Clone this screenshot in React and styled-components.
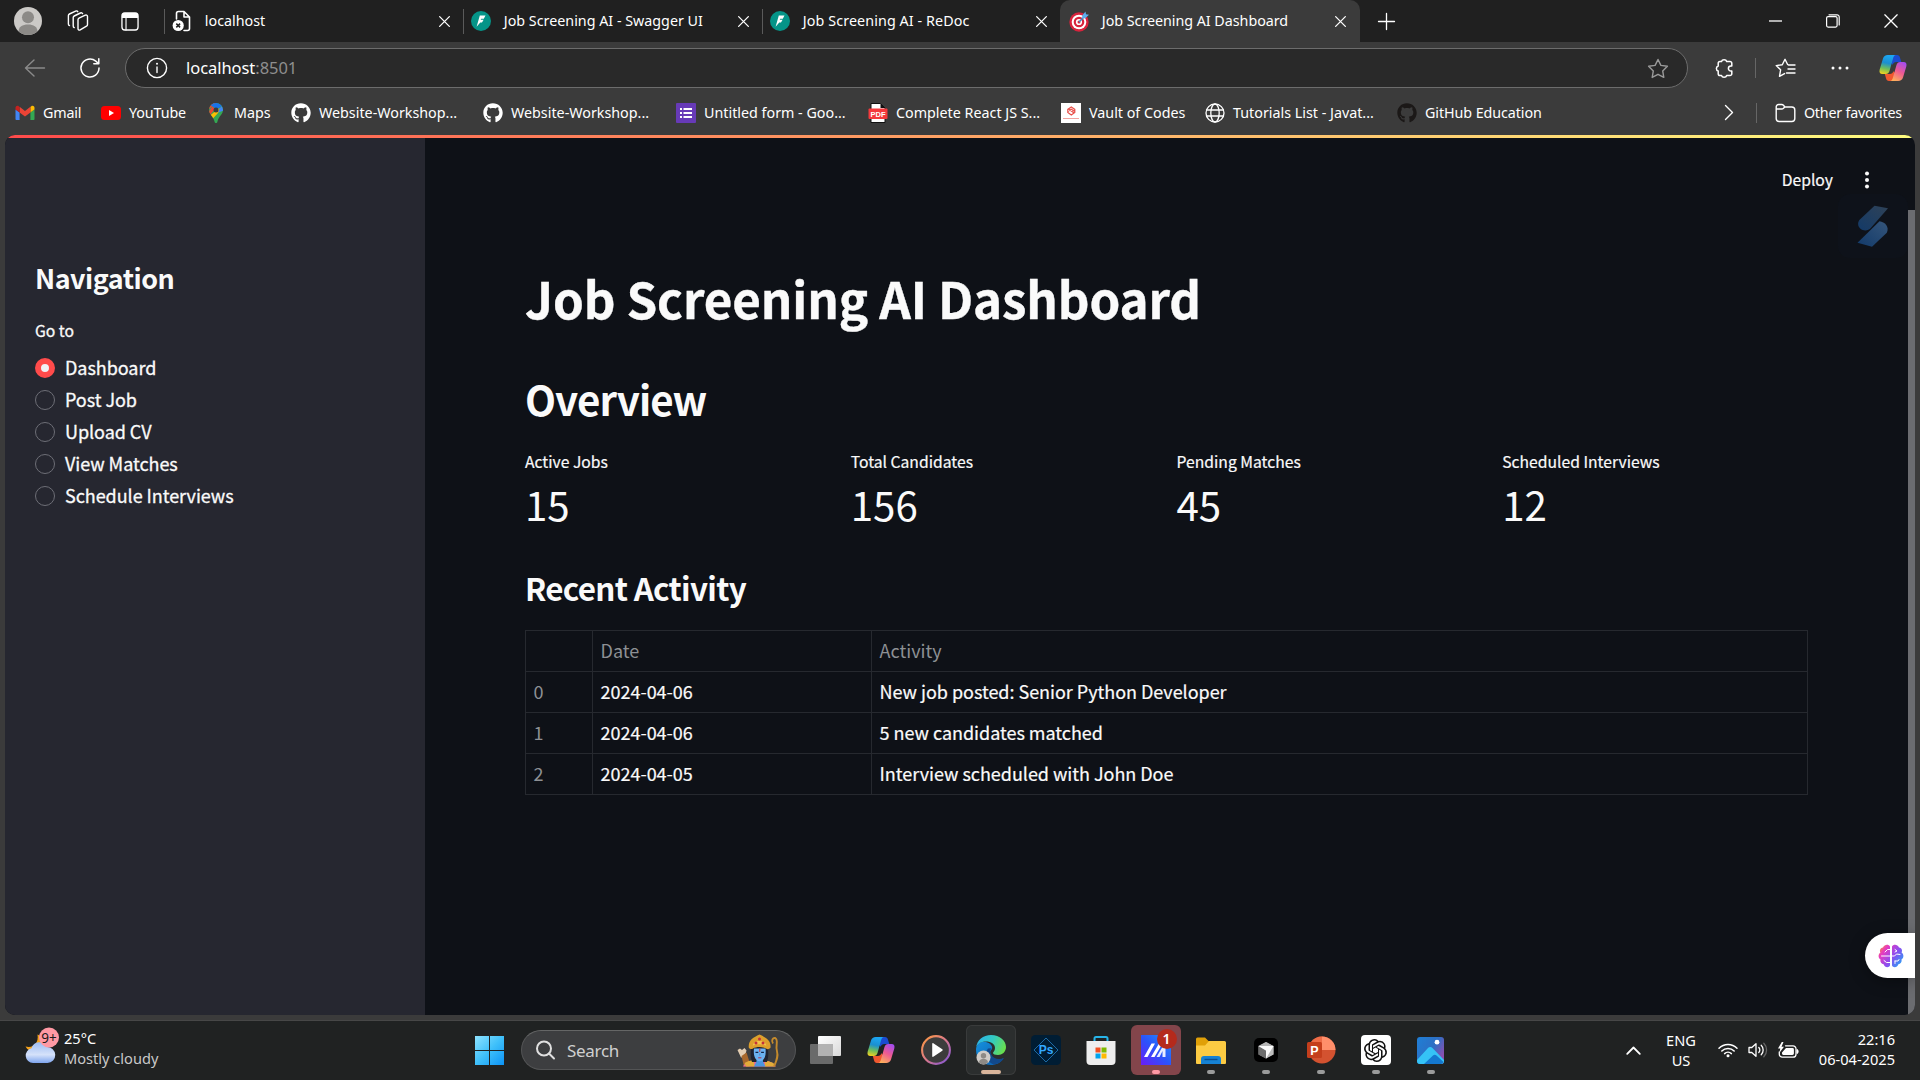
import React from "react";
import styled, { createGlobalStyle, css } from "styled-components";
import { FaGithub } from "react-icons/fa";
import { SiOpenai } from "react-icons/si";

const SEGOE = `"Noto Sans", "Open Sans", sans-serif`;
const SOURCE = `"Noto Sans CJK SC", "Noto Sans CJK JP", "Noto Sans", sans-serif`;

const Global = createGlobalStyle`
  * { box-sizing: border-box; }
  html, body { margin: 0; padding: 0; background: #3b3b3b; overflow: hidden; }
  body { font-family: ${SEGOE}; color: #fff; }
  svg { display: block; flex: none; overflow: visible; }
`;

const Screen = styled.div`
  width: 1920px;
  height: 1080px;
  display: flex;
  flex-direction: column;
  background: #3b3b3b;
  overflow: hidden;
`;

/* ---------- browser chrome ---------- */
const TabStrip = styled.header`
  height: 42px;
  flex: none;
  display: flex;
  align-items: stretch;
  background: #202020;
`;
const StripTools = styled.div`
  width: 164px;
  flex: none;
  display: flex;
  align-items: center;
  padding-left: 14px;
`;
const StripTool = styled.span`
  width: ${(p) => p.$w}px;
  display: flex;
  flex: none;
`;
const TabItem = styled.div`
  width: ${(p) => p.$w || 299}px;
  flex: none;
  display: flex;
  align-items: center;
  padding: 0 13px 0 8px;
  ${(p) =>
    p.$active
      ? css`
          background: #3b3b3b;
          border-radius: 10px 10px 0 0;
          padding: 0 14px 0 9px;
        `
      : css`
          background: linear-gradient(#5a5a5a, #5a5a5a) 0 9px / 1px 25px no-repeat;
        `}
`;
const TabTitle = styled.span`
  flex: 1;
  margin-left: 12.8px;
  font-size: 14.3px;
  line-height: 20px;
  letter-spacing: ${(p) => p.$ls || 0}px;
  white-space: nowrap;
`;
const NewTab = styled.div`
  width: 53px;
  display: flex;
  align-items: center;
  justify-content: center;
`;
const WindowButtons = styled.div`
  margin-left: auto;
  display: flex;
`;
const WindowButton = styled.div`
  width: 58px;
  display: flex;
  align-items: center;
  justify-content: center;
`;
const AddressRow = styled.div`
  height: 52px;
  flex: none;
  display: flex;
  align-items: center;
  padding-left: 24px;
`;
const NavButton = styled.span`
  width: ${(p) => p.$w}px;
  display: flex;
  flex: none;
`;
const AddressBar = styled.div`
  width: 1563px;
  height: 40px;
  flex: none;
  display: flex;
  align-items: center;
  padding: 0 18px 0 20px;
  border: 1px solid #6c6c6c;
  border-radius: 20px;
  background: #292929;
`;
const Url = styled.span`
  flex: 1;
  margin-left: 18px;
  padding-bottom: 1px;
  font-size: 16.5px;
  line-height: 24px;
  letter-spacing: -0.05px;
  color: #fff;
`;
const UrlPort = styled.span`
  color: #8e8e8e;
`;
const ToolCell = styled.span`
  width: ${(p) => p.$w}px;
  padding-left: ${(p) => p.$pl || 0}px;
  display: flex;
  justify-content: center;
  flex: none;
`;
const Rule = styled.i`
  width: 1px;
  height: 20px;
  flex: none;
  background: #666;
`;
const FavoritesBar = styled.nav`
  height: 41px;
  flex: none;
  display: flex;
  align-items: center;
  padding: 0 18px 4px 15px;
`;
const Favorite = styled.div`
  width: ${(p) => (p.$w ? `${p.$w}px` : "auto")};
  flex: none;
  display: flex;
  align-items: center;
  gap: 8px;
  font-size: 14.3px;
  line-height: 20px;
  letter-spacing: ${(p) => p.$ls || 0}px;
  white-space: nowrap;
`;
const FavoriteName = styled.span`
  padding-top: 1px;
`;
const FavoritesEnd = styled.div`
  margin-left: auto;
  display: flex;
  align-items: center;
`;

/* ---------- dashboard page ---------- */
const Page = styled.div`
  position: relative;
  height: 880px;
  margin: 0 5px 5px;
  flex: none;
  display: flex;
  background: #0e1117;
  border-radius: 10px;
  overflow: hidden;
`;
const Decoration = styled.div`
  position: absolute;
  left: 0;
  right: 0;
  top: 0;
  height: 3px;
  background: linear-gradient(90deg, #ff4b4b, #fffd80);
`;
const Sidebar = styled.aside`
  width: 420px;
  flex: none;
  padding: 125px 30px 0;
  background: #262730;
  font-family: ${SOURCE};
`;
const NavHeading = styled.h2`
  margin: 0;
  font-size: 26.9px;
  line-height: 36px;
  font-weight: 700;
  letter-spacing: -0.48px;
  color: #fafafa;
`;
const RadioLabel = styled.p`
  margin: 21px 0 7px;
  font-size: 15.7px;
  line-height: 28px;
  -webkit-text-stroke: 0.3px #fafafa;
  color: #fafafa;
`;
const RadioRow = styled.label`
  height: 32px;
  display: flex;
  align-items: center;
  gap: 10px;
  font-size: 18px;
  line-height: 30px;
  letter-spacing: -0.05px;
  -webkit-text-stroke: 0.3px #fafafa;
  color: #fafafa;
`;
const RadioText = styled.span`
  padding-bottom: 2px;
`;
const Dot = styled.span`
  width: 20px;
  height: 20px;
  flex: none;
  border-radius: 50%;
  ${(p) =>
    p.$on
      ? css`
          border: 6px solid #ff4b4b;
          background: #f0f2f6;
        `
      : css`
          border: 1px solid #6d6e76;
        `}
`;
const Main = styled.main`
  flex: 1;
  padding: 0 100px;
  font-family: ${SOURCE};
  color: #fafafa;
`;
const Toolbar = styled.div`
  height: 75px;
  margin-right: -100px;
  padding: 15px 58px 0 0;
  display: flex;
  align-items: center;
  justify-content: flex-end;
  gap: 31px;
  font-size: 15.7px;
  line-height: 24px;
`;
const DeployLabel = styled.span`
  padding-bottom: 1px;
  -webkit-text-stroke: 0.2px #fafafa;
`;
const Title = styled.h1`
  margin: 55px 0 0;
  font-size: 49.3px;
  line-height: 66px;
  font-weight: 700;
  letter-spacing: -0.1px;
  -webkit-text-stroke: 0.4px #fafafa;
  white-space: nowrap;
`;
const SectionTitle = styled.h2`
  margin: ${(p) => p.$mt}px 0 0;
  font-size: ${(p) => p.$size}px;
  line-height: 54px;
  font-weight: 700;
  letter-spacing: ${(p) => p.$ls}px;
  white-space: nowrap;
`;
const Metrics = styled.div`
  display: grid;
  grid-template-columns: repeat(4, 1fr);
  width: 1303px;
  margin-top: 23px;
`;
const MetricLabel = styled.div`
  font-size: 15.7px;
  line-height: 26px;
  -webkit-text-stroke: 0.2px #fafafa;
`;
const MetricValue = styled.div`
  font-size: 40.3px;
  line-height: 56px;
  padding: 1px 0 2px;
`;
const Table = styled.table`
  width: 1283px;
  margin-top: 15px;
  table-layout: fixed;
  border-collapse: collapse;
  font-size: 18px;
  line-height: 24px;
`;
const Cell = styled.td`
  width: ${(p) => p.$w || "auto"};
  height: 41px;
  padding: 0 7px 2px 7.6px;
  border: 1px solid #26292f;
  text-align: left;
  font-weight: 400;
  letter-spacing: -0.03px;
  white-space: nowrap;
  color: ${(p) => (p.$muted ? "#8d9094" : "#fafafa")};
  ${(p) => !p.$muted && "-webkit-text-stroke: 0.2px #fafafa;"}
`;
const ScrollThumb = styled.div`
  position: absolute;
  right: 0;
  top: 75px;
  width: 7px;
  bottom: 0;
  background: #6b6c70;
`;
const SideLogo = styled.div`
  position: absolute;
  right: 7px;
  top: 59px;
  width: 70px;
  height: 64px;
  display: flex;
  align-items: center;
  justify-content: center;
  border-radius: 12px;
  background: rgba(16, 24, 40, 0.2);
`;
const BrainButton = styled.div`
  position: absolute;
  right: 0;
  top: 798px;
  width: 50px;
  height: 45px;
  padding-left: 13px;
  display: flex;
  align-items: center;
  border-radius: 23px 0 0 23px;
  background: #fff;
  box-shadow: 0 3px 16px rgba(0, 0, 0, 0.35);
`;

/* ---------- taskbar ---------- */
const TaskBar = styled.footer`
  height: 60px;
  flex: none;
  display: flex;
  align-items: center;
  padding: 0 25px 1px;
  border-top: 1px solid #474747;
  background: #202222;
`;
const Weather = styled.div`
  width: 450px;
  flex: none;
  display: flex;
  align-items: center;
  gap: 4px;
  padding-bottom: 4px;
`;
const Lines = styled.div`
  font-size: 14.6px;
  line-height: 20px;
  padding-bottom: ${(p) => p.$pb || 0}px;
  text-align: ${(p) => p.$align || "left"};
  white-space: nowrap;
`;
const Dim = styled.div`
  color: #c9c9c9;
`;
const SearchBox = styled.div`
  width: 275px;
  height: 40px;
  margin: 0 2px 0 17px;
  flex: none;
  display: flex;
  align-items: center;
  padding: 0 15px 0 13px;
  border: 1px solid #535455;
  border-top-color: #656666;
  border-radius: 20px;
  background: #3d3e40;
`;
const SearchText = styled.span`
  flex: 1;
  margin-left: 11px;
  font-size: 17px;
  letter-spacing: -0.3px;
  color: #d0d0d0;
`;
const AppSlot = styled.div`
  position: relative;
  width: 50px;
  height: 50px;
  margin: 0 2.5px;
  flex: none;
  display: flex;
  align-items: center;
  justify-content: center;
  border-radius: 6px;
  background: ${(p) => p.$bg || "transparent"};
  ${(p) => p.$outline && "box-shadow: inset 0 0 0 1px #393b3b;"}
`;
const Indicator = styled.i`
  position: absolute;
  bottom: 1px;
  left: ${(p) => 25 - p.$w / 2}px;
  width: ${(p) => p.$w}px;
  height: 4px;
  border-radius: 2px;
  background: ${(p) => p.$c || "#9a9b9b"};
`;
const Count = styled.span`
  position: absolute;
  left: 26px;
  top: 4px;
  width: 20px;
  height: 20px;
  border-radius: 50%;
  background: #b52a1c;
  font-size: 14px;
  line-height: 20px;
  font-weight: 600;
  text-align: center;
`;
const Tray = styled.div`
  margin-left: auto;
  display: flex;
  align-items: center;
`;
const TrayCell = styled.div`
  width: ${(p) => p.$w}px;
  flex: none;
  display: flex;
  justify-content: ${(p) => p.$j || "center"};
`;

/* ---------- icons ---------- */
const line = { fill: "none", stroke: "#fff", strokeWidth: 1.4, strokeLinecap: "round", strokeLinejoin: "round" };

const Avatar = ({ size = 28 }) => (
  <svg width={size} height={size} viewBox="0 0 28 28">
    <clipPath id={`av${size}`}><circle cx="14" cy="14" r="14" /></clipPath>
    <g clipPath={`url(#av${size})`}>
      <rect width="28" height="28" fill="#cbc9c6" />
      <circle cx="14" cy="10.3" r="6" fill="#8c8a87" />
      <path d="M4.500 28v-3.500c0-4.500 4-7 9.500-7s9.500 2.500 9.500 7V28z" fill="#8c8a87" />
    </g>
  </svg>
);
const Workspaces = () => (
  <svg width="22" height="22" viewBox="0 0 22 22" {...line}>
    <path d="M11 9.800c0-.7.400-1.300 1-1.600l6.300-3c1.200-.5 2.200.2 2.200 1.300v7.900c0 .7-.4 1.400-1 1.700l-6.300 3.800c-1.200.6-2.200 0-2.200-1.300z" />
    <path d="M7.200 17.600C6.500 17.300 6.200 16.800 6.200 16V7.600c0-.7.400-1.300 1-1.600l6.200-3c.9-.4 1.900-.1 2.200.6" />
    <path d="M2.500 15.600c-.8-.300-1.100-.8-1.100-1.600V5.600c0-.7.400-1.300 1-1.600l6.200-2.900c.9-.4 1.900-.1 2.200.6" />
  </svg>
);
const TabActions = () => (
  <svg width="18" height="19" viewBox="0 0 19 19" preserveAspectRatio="none">
    <rect x="1" y="1" width="17" height="17" rx="3" {...line} />
    <path d="M1 4a3 3 0 0 1 3-3h11a3 3 0 0 1 3 3v2H1z" fill="#fff" />
    <path d="M5.300 6v12" {...line} strokeWidth="1.200" />
  </svg>
);
const BrokenPage = () => (
  <svg width="20" height="22" viewBox="0 0 20 22">
    <path d="M4.500 9V3.500A2 2 0 0 1 6.500 1.500H12l5.500 5.500v11.500a2 2 0 0 1-2 2H12M12 1.800V7h5.200" {...line} strokeWidth="1.600" />
    <circle cx="6.200" cy="15.500" r="5.600" fill="#fff" />
    <path d="m4.300 13.600 3.800 3.800m0-3.800-3.800 3.800" stroke="#202020" strokeWidth="1.500" />
  </svg>
);
const FastApi = () => (
  <svg width="20" height="20" viewBox="0 0 20 20">
    <circle cx="10" cy="10" r="10" fill="#059488" />
    <path d="M8.800 4.500h5.700l-1.700 3.200h-2.600l-.500 1.100h2.900l-1.600 2.800H9.300L5.600 15.800z" fill="#fff" />
  </svg>
);
const Target = () => (
  <svg width="20" height="21" viewBox="0 0 20 21">
    <circle cx="10" cy="11" r="9.700" fill="#d8233c" />
    <circle cx="10" cy="11" r="7.300" fill="#fff" />
    <circle cx="10" cy="11" r="5.300" fill="#d8233c" />
    <circle cx="10" cy="11" r="3.100" fill="#fff" />
    <circle cx="10" cy="11" r="1.500" fill="#d8233c" />
    <path d="m10 11 6-6" stroke="#3b88c3" strokeWidth="1.400" />
    <path d="m13.200 4.500 3.300-4L17 3.300l3 .4-3.700 3.600-3 .2z" fill="#5dadec" />
  </svg>
);
const Close = ({ s = 11, w = 1.4 }) => (
  <svg width={s} height={s} viewBox="0 0 12 12"><path d="m.7.7 10.600 10.600m0-10.600L.7 11.300" {...line} strokeWidth={w} /></svg>
);
const Plus = () => (
  <svg width="17" height="17" viewBox="0 0 17 17"><path d="M8.500.5v16M.5 8.500h16" {...line} strokeWidth="1.300" /></svg>
);
const Restore = () => (
  <svg width="14" height="14" viewBox="0 0 14 14" {...line} strokeWidth="1.200">
    <rect x=".6" y="2.600" width="10.500" height="10.500" rx="1.500" />
    <path d="M3 .8h8a2.200 2.200 0 0 1 2.200 2.200v8" />
  </svg>
);
const Back = () => (
  <svg width="22" height="20" viewBox="0 0 22 20"><path d="M10 2 1.500 10 10 18M1.500 10h19" {...line} stroke="#8a8a8a" /></svg>
);
const Reload = () => (
  <svg width="22" height="22" viewBox="0 0 22 22"><path d="M20 11a9 9 0 1 1-3.200-6.900L19.500 6.500M19.800 1.800v5h-5" {...line} strokeWidth="1.500" /></svg>
);
const Info = () => (
  <svg width="22" height="22" viewBox="0 0 22 22">
    <circle cx="11" cy="11" r="9.600" {...line} />
    <path d="M11 10v5.500" {...line} />
    <circle cx="11" cy="6.800" r="1" fill="#fff" />
  </svg>
);
const Star = () => (
  <svg width="22" height="21" viewBox="0 0 22 21">
    <path d="m11 1.500 2.900 5.900 6.500.9-4.700 4.600 1.100 6.500L11 16.300l-5.800 3.100 1.100-6.500L1.600 8.300l6.500-.9z" {...line} stroke="#9a9a9a" />
  </svg>
);
const Puzzle = () => (
  <svg width="20" height="21" viewBox="0 0 20 21">
    <path d="M6 3.500h1.500a2.700 2.500 0 0 1 5.200 0H16A1.800 1.800 0 0 1 17.800 5.300V8h-.900a2.500 2.500 0 0 0 0 5h.9v2.700A1.800 1.800 0 0 1 16 17.500h-3.300a2.700 2.500 0 0 1-5.200 0H6a1.800 1.800 0 0 1-1.800-1.800V13a2.500 2.600 0 0 1 0-5V5.300A1.800 1.800 0 0 1 6 3.500z" {...line} strokeWidth="1.500" />
  </svg>
);
const FavList = () => (
  <svg width="21" height="20" viewBox="0 0 21 20" {...line}>
    <path d="M13 6.600 12.600 6.500 10 1.300 7.300 6.700 1.200 7.600l4.400 4.200-1.100 6.500 5-2.700M13.500 7h6.500M13 11h7M11.500 15h8.500" />
  </svg>
);
const Dots = () => (
  <svg width="18" height="4" viewBox="0 0 18 4" fill="#fff"><circle cx="2" cy="2" r="1.500" /><circle cx="9" cy="2" r="1.500" /><circle cx="16" cy="2" r="1.500" /></svg>
);
const Copilot = ({ s = 28, id }) => (
  <svg width={s} height={s} viewBox="0 0 28 28">
    <defs>
      <linearGradient id={`${id}a`} x1=".4" y1="0" x2=".2" y2="1">
        <stop offset="0" stopColor="#1ca6f2" /><stop offset=".4" stopColor="#1b8fd0" /><stop offset=".7" stopColor="#6fbf5a" /><stop offset="1" stopColor="#f4d21f" />
      </linearGradient>
      <linearGradient id={`${id}b`} x1=".8" y1="0" x2=".3" y2="1">
        <stop offset="0" stopColor="#a34cf0" /><stop offset=".5" stopColor="#ee5a92" /><stop offset="1" stopColor="#fdaf5c" />
      </linearGradient>
    </defs>
    <path d="M11 1h7c1.700 0 2.500 1 3 2.700L22.300 8h-5c-2 0-3 1-3.500 2.800L12 9z" fill="#1b4bd0" />
    <path d="M17 27h-7c-1.700 0-2.500-1-3-2.700L5.800 20h5c2 0 3-1 3.500-2.800L16 19z" fill="#f0582f" />
    <path d="M8.800 1H17c-1.700 0-2.400 1.500-2.900 3.200L10.500 17c-.6 2-1.800 3-3.700 3H3.500C.8 20 0 18 .7 15.500L4 4.500C4.700 2.200 6.300 1 8.800 1z" fill={`url(#${id}a)`} />
    <path d="M19.200 27H11c1.700 0 2.400-1.500 2.900-3.200L17.500 11c.6-2 1.800-3 3.700-3h3.300c2.700 0 3.500 2 2.800 4.500l-3.300 11c-.7 2.300-2.300 3.500-4.800 3.500z" fill={`url(#${id}b)`} />
  </svg>
);
const Gmail = () => (
  <svg width="20" height="16" viewBox="0 0 20 16">
    <path d="M1.600 15h3V7.500L.5 4.500v9.400c0 .6.500 1.100 1.100 1.100z" fill="#4285f4" />
    <path d="M15.400 15h3c.6 0 1.100-.5 1.100-1.100V4.500l-4.100 3z" fill="#34a853" />
    <path d="M15.400 2v5.500l4.100-3V2.800c0-1.700-1.900-2.600-3.200-1.600z" fill="#fbbc04" />
    <path d="M4.600 7.500V1.800L10 6l5.400-4.200v5.700L10 11.600z" fill="#ea4335" />
    <path d="M.5 2.800v1.700l4.100 3V1.900l-.9-.7C2.400.200.5 1.100.5 2.800z" fill="#c5221f" />
  </svg>
);
const YouTube = () => (
  <svg width="20" height="20" viewBox="0 0 20 20"><rect x="0" y="3" width="20" height="14" rx="3.500" fill="#f00" /><path d="M8 7v6l5-3z" fill="#fff" /></svg>
);
const Maps = () => (
  <svg width="18" height="20" viewBox="0 0 18 20">
    <clipPath id="pin"><path d="M8 0a7 7 0 0 1 7 7c0 4.500-4.500 6.500-5.500 11.500-.3 1.500-.8 1.500-1.500 1.500s-1.200 0-1.500-1.500C5.500 13.500 1 11.500 1 7a7 7 0 0 1 7-7z" /></clipPath>
    <g clipPath="url(#pin)">
      <rect width="18" height="20" fill="#34a853" />
      <path d="M-1 8 8 0H-1z" fill="#ea4335" />
      <path d="m3 2.500 6 4L15 2V0H3z" fill="#1a73e8" />
      <path d="m10 7 5-5 2 5-8 3z" fill="#4285f4" />
      <path d="M2 12.500 11.500 5 10 10l-5.500 6z" fill="#fbbc04" />
      <path d="M0 9.500 4.500 3.500 7 6l-5 6z" fill="#ea4335" />
    </g>
    <circle cx="8" cy="7" r="2.500" fill="#3b3b3b" />
  </svg>
);
const FormsIcon = () => (
  <svg width="20" height="20" viewBox="0 0 20 20">
    <rect width="20" height="20" rx="1" fill="#673ab7" />
    <path d="M4 5h2v2H4zm3.500 0H16v2H7.500zM4 9h2v2H4zm3.500 0H16v2H7.500zM4 13h2v2H4zm3.500 0H16v2H7.500z" fill="#fff" />
  </svg>
);
const PdfIcon = () => (
  <svg width="20" height="20" viewBox="0 0 20 20">
    <path d="M3 .5h9.500L17 5v14.500H3z" fill="#fff" stroke="#111" />
    <path d="M12.500.5V5H17z" fill="#111" />
    <rect x=".5" y="5.500" width="19" height="10.500" rx="1" fill="#f4393c" />
    <text x="10" y="13.600" textAnchor="middle" fontFamily="Liberation Sans, sans-serif" fontSize="7.500" fontWeight="700" fill="#fff">PDF</text>
  </svg>
);
const Vault = () => (
  <svg width="20" height="20" viewBox="0 0 20 20">
    <rect width="20" height="20" fill="#fff" />
    <g fill="none" stroke="#e8504a" strokeWidth="1.200"><path d="m10.300 4 3.500 2.400v3L10.300 12l-3.500-2.600v-3zM6.800 8.400l3.500-2.100 3.500 2.100M7.500 6l5.600 4" /></g>
    <path d="M2 15.500h16" stroke="#f2a39f" />
  </svg>
);
const Globe = () => (
  <svg width="20" height="20" viewBox="0 0 20 20" {...line} strokeWidth="1.300">
    <circle cx="10" cy="10" r="9" /><ellipse cx="10" cy="10" rx="4.200" ry="9" /><path d="M1.500 7h17M1.500 13h17" />
  </svg>
);
const ChevronR = () => (
  <svg width="10" height="17" viewBox="0 0 10 17"><path d="m1.500 1.500 7 7-7 7" {...line} /></svg>
);
const Folder = () => (
  <svg width="21" height="20" viewBox="0 0 21 20" {...line}>
    <path d="M1.200 5v10.500a3 3 0 0 0 3 3h12.600a3 3 0 0 0 3-3V7a3 3 0 0 0-3-3h-7L8.500 2.300A3 3 0 0 0 6.700 1.500H3.500A2.300 2.300 0 0 0 1.200 3.800zM1.200 6h5.500a2.500 2.500 0 0 0 1.800-.7L9.800 4" />
  </svg>
);
const Kebab = () => (
  <svg width="6" height="18" viewBox="0 0 6 18" fill="#fafafa"><circle cx="3" cy="2.400" r="2" /><circle cx="3" cy="9" r="2" /><circle cx="3" cy="15.600" r="2" /></svg>
);
const SMark = () => (
  <svg width="32" height="42" viewBox="0 0 32 42">
    <defs>
      <linearGradient id="sa" x1="1" y1="0" x2="0" y2="1"><stop offset="0" stopColor="#2f4257" /><stop offset="1" stopColor="#133a68" /></linearGradient>
      <linearGradient id="sb" x1="1" y1="0" x2="0" y2="1"><stop offset="0" stopColor="#35557a" /><stop offset="1" stopColor="#123a6a" /></linearGradient>
    </defs>
    <path d="M17.500.8 31 3.200 14 22.800c-2.200 2.300-5 3.400-8.300 2.300C.7 23 .1 18 2.400 15z" fill="url(#sa)" />
    <path d="M22.500 16.300c5.200.5 10.200 5.700 7.300 11.400L15 41.700.5 37.800z" fill="url(#sb)" />
  </svg>
);
const BrainIcon = () => (
  <svg width="26" height="24" viewBox="0 0 26 24">
    <defs>
      <linearGradient id="br" x1="0" y1=".1" x2="1" y2=".8"><stop offset="0" stopColor="#f79a2d" /><stop offset=".22" stopColor="#e93bbd" /><stop offset=".6" stopColor="#8b4df0" /><stop offset="1" stopColor="#27a4f5" /></linearGradient>
    </defs>
    <path d="M12 2.500C11 .3 6.500-.2 5 3.600 2 4 1.400 7 2.400 8.500 0 10 0 14 2.400 15.300c-.5 3 1.200 4.700 3.200 4.900C6.700 24 11 24 12 21.500zM14 2.500C15 .3 19.500-.2 21 3.600c3 .4 3.600 3.400 2.600 4.900 2.400 1.500 2.400 5.500 0 6.800.5 3-1.200 4.700-3.200 4.900-1.100 3.800-5.400 3.800-6.400 1.300z" fill="url(#br)" />
    <g fill="none" stroke="#fff" strokeWidth="1" strokeLinecap="round"><path d="M12 5.500H9.500L7 8M3.500 12H12M6 16.500l2.500 2H12M14 12h2.500l2-2 3.500.5M17 5.500l2 1.500-2 1M17 17h3l1-1.500M17 17v2.500" /></g>
  </svg>
);
const WeatherIcon = () => (
  <svg width="35" height="40" viewBox="0 2.500 35 40">
    <defs><linearGradient id="cl" x1="0" y1="0" x2="0" y2="1"><stop offset="0" stopColor="#9dbcf3" /><stop offset=".6" stopColor="#d5e2fa" /><stop offset="1" stopColor="#7ea5ee" /></linearGradient></defs>
    <path d="M12.500 9C14 18 8 23 .5 21c2 4 6 5.500 10 5s8-4 8-9-3-7-6-8z" fill="#f2a11c" />
    <path d="M8 37.500a7.500 7.500 0 0 1-1.500-14.800A8.300 8.300 0 0 1 22 21.500 8 8 0 0 1 22.500 37.500z" fill="url(#cl)" />
    <circle cx="24" cy="12" r="10" fill="#ff99a4" />
    <text x="24" y="17" textAnchor="middle" fontFamily="Noto Sans, sans-serif" fontSize="13.500" fill="#1b1b1b">9+</text>
  </svg>
);
const WinLogo = () => (
  <svg width="29" height="29" viewBox="0 0 29 29">
    <defs><linearGradient id="wn" x1="0" y1="0" x2="1" y2="1"><stop offset="0" stopColor="#8fe3ff" /><stop offset=".5" stopColor="#3fc0fa" /><stop offset="1" stopColor="#0c93f5" /></linearGradient></defs>
    <path d="M0 0h14v14H0zM15 0h14v14H15zM0 15h14v14H0zM15 15h14v14H15z" fill="url(#wn)" />
  </svg>
);
const Magnifier = () => (
  <svg width="21" height="20" viewBox="0 0 21 20" fill="none" stroke="#e0e0e0" strokeWidth="2" strokeLinecap="round"><circle cx="9" cy="8.500" r="7" /><path d="m14 13.500 5 5" /></svg>
);
const Deity = () => (
  <svg width="43" height="33" viewBox="0 0 43 33">
    <path d="m.500 16 2.500-1.500 2 1.500 2.500-2 2 2.500-2 6.500-3.500.5z" fill="#e3cdb2" />
    <path d="m4.500 22 5-3.500 2.500 8 .5 6H7z" fill="#a8682c" />
    <path d="M6 32.500c1.500-3.500 6-5.500 11-6h11c5 .5 9 2.500 11 6z" fill="#ea6b91" />
    <path d="M7.500 29c2.500-1.600 6-2.600 9-2.800l1 6.300H9zM28.500 26.200l8 2.800 1 3.500h-10z" fill="#e3ac3a" />
    <path d="M14.500 13c-1.200 5-1 10.500.5 15h15c1.500-4.500 1.700-10 .5-15z" fill="#20222f" />
    <path d="M19.500 24h6.500v3.500l2.500 5h-11.500l2.500-5z" fill="#4a96df" />
    <path d="M17 14.500h11.500c.8 6.500-.7 12.300-5.700 12.800-5-.5-6.600-6.300-5.800-12.800z" fill="#6cb2f2" />
    <path d="M11.800 13.800C11 6.500 16 3.500 22.500.5c6.500 3 11.800 6 11 13.300-1.300 1.500-3.300 1.800-4.500.7-3.500-2-9.500-2-13 0-1.300 1-3.200.8-4.200-.7z" fill="#dd9f2c" />
    <path d="M15.800 11.800c.5-6.500 13-6.500 13.500 0-4-2-9.500-2-13.500 0z" fill="#f3c24b" />
    <circle cx="19" cy="9" r="1.500" fill="#c4303a" /><circle cx="26" cy="9" r="1.500" fill="#c4303a" /><circle cx="22.500" cy="5" r="1.500" fill="#c4303a" />
    <path d="M22.200 14.800h1.200l-.2 3.200h-.8z" fill="#d9342b" />
    <path d="M18.500 18.300h2.800m2.800 0h2.800" stroke="#16254a" strokeWidth="1.300" />
    <path d="M22.800 19.500v2" stroke="#3f86cc" strokeWidth=".9" /><path d="M21.200 23.800h3.200" stroke="#b3304b" strokeWidth="1" />
    <path d="M36 9.500c-2.200-3 0-6 2.200-5.500 3.800 2-.2 8 1.800 13.500 1.500 5-.5 9-3 15" fill="none" stroke="#c48a2c" strokeWidth="1.900" />
  </svg>
);
const TaskView = () => (
  <svg width="31" height="30" viewBox="0 0 31 30">
    <defs><linearGradient id="tv" x1="0" y1="0" x2="1" y2="1"><stop offset="0" stopColor="#fff" /><stop offset="1" stopColor="#d9d9d9" /></linearGradient></defs>
    <rect x="8" y="1" width="23" height="20" rx="1" fill="url(#tv)" /><rect x="0" y="9" width="23" height="20" rx="1" fill="#6a6b6b" /><path d="M8 9h15v12H8z" fill="#b2b2b2" />
  </svg>
);
const Player = () => (
  <svg width="30" height="30" viewBox="0 0 30 30">
    <defs><linearGradient id="pl" x1="0" y1="0" x2="1" y2="1"><stop offset="0" stopColor="#ff9a3c" /><stop offset=".5" stopColor="#d9788c" /><stop offset="1" stopColor="#7a52dc" /></linearGradient></defs>
    <circle cx="15" cy="15" r="13.900" fill="#3c3c3c" stroke="url(#pl)" strokeWidth="2.100" /><path d="M11.200 8.800c0-.6.600-.9 1.100-.6l9 6.100c.5.300.5 1 0 1.400l-9 6.100c-.5.300-1.100 0-1.100-.6z" fill="#fff" />
  </svg>
);
const Edge = () => (
  <svg width="30" height="30" viewBox="0 0 30 30">
    <defs>
      <linearGradient id="ea" x1="0" y1=".3" x2="1" y2=".6"><stop offset="0" stopColor="#2bb3ea" /><stop offset=".5" stopColor="#33c9c0" /><stop offset="1" stopColor="#6be04a" /></linearGradient>
      <linearGradient id="eb" x1="0" y1="0" x2="1" y2="1"><stop offset="0" stopColor="#1590dd" /><stop offset="1" stopColor="#0b5cae" /></linearGradient>
    </defs>
    <path d="M0 15C0 9 5 6 10 7c4 .8 7 4 6 7-2 2-3 5-1 8 2 4 8 4 12.500 1C24.500 28 20 30 15 30 7 30 0 24 0 15z" fill="url(#eb)" />
    <path d="M12 13.500c-3.500 4-2.500 12.500 5.500 16 4.500-.5 8.500-3 10.500-6.500-5 2-11 1-13-4-1-2.300-1-4.300.5-5.700z" fill="#11498c" />
    <path d="M0 13C1 5 7 0 15 0c9 0 15 6 15 12 0 5-4 8-8 8-3 0-5-1-5-2s2-2 2-5c0-4-4-6.500-9-6.500C5 6.500 1 9 0 13z" fill="url(#ea)" />
    <g transform="translate(.5 15.500)"><circle cx="7" cy="7" r="7" fill="#cfccc8" /><circle cx="7" cy="5.300" r="2.700" fill="#8d8a86" /><path d="M2.500 12c0-5 9-5 9 0-2.500 2.500-6.500 2.500-9 0z" fill="#8d8a86" /></g>
  </svg>
);
const Photoshop = () => (
  <svg width="30" height="30" viewBox="0 0 30 30">
    <rect width="30" height="30" rx="4.500" fill="#001d34" /><path d="m15 3 12 12-12 12L3 15z" fill="none" stroke="#1c6aa6" strokeWidth="1" />
    <text x="15" y="19.300" textAnchor="middle" fontFamily="Liberation Sans, sans-serif" fontSize="12" fontWeight="700" fill="#31a8ff">Ps</text>
  </svg>
);
const Store = () => (
  <svg width="30" height="30" viewBox="0 0 30 30">
    <path d="M8.500 6V3.500a1.500 1.500 0 0 1 1.500-1.500h10a1.500 1.500 0 0 1 1.500 1.500V6" fill="none" stroke="#27b4e8" strokeWidth="2" />
    <path d="M.5 6h29v20a4 4 0 0 1-4 4h-21a4 4 0 0 1-4-4z" fill="#eeeeee" />
    <path d="M9.500 12.500h5v5h-5z" fill="#f25022" /><path d="M15.500 12.500h5v5h-5z" fill="#7fba00" /><path d="M9.500 18.500h5v5h-5z" fill="#00a4ef" /><path d="M15.500 18.500h5v5h-5z" fill="#ffb900" />
  </svg>
);
const MyAsus = () => (
  <svg width="30" height="30" viewBox="0 0 30 30">
    <defs><linearGradient id="my" x1="0" y1="1" x2="1" y2="0"><stop offset="0" stopColor="#6a1cf5" /><stop offset=".5" stopColor="#2a55fb" /><stop offset="1" stopColor="#2196f8" /></linearGradient></defs>
    <rect width="30" height="30" fill="url(#my)" />
    <path d="M3 22 10.500 8.500h3.500L6.500 22zM10 22l8-13.500h3.500L13.500 22z" fill="#fff" /><path d="m15.500 22 6.500-11 2.500-1.500V22h-3v-6l-3 6z" fill="#e8edff" />
  </svg>
);
const Explorer = () => (
  <svg width="30" height="27" viewBox="0 0 30 27">
    <path d="M0 2a1.500 1.500 0 0 1 1.500-1.500H9L12.500 4H28v6H0z" fill="#e0a008" />
    <path d="M0 8.500h9L13 4h15.500A1.500 1.500 0 0 1 30 5.500V26a1 1 0 0 1-1 1H1a1 1 0 0 1-1-1z" fill="#fccb43" />
    <path d="M5 27v-5a3 3 0 0 1 3-3h14a3 3 0 0 1 3 3v5z" fill="#1682d4" /><path d="M8.500 22.500h13" stroke="#0b4f91" strokeWidth="1.400" />
  </svg>
);
const Cursor = () => (
  <svg width="26" height="26" viewBox="0 0 26 26">
    <rect x="1" y="1" width="24" height="24" rx="5" fill="#000" />
    <path d="m13 5 7.500 4v8.500L13 21.500 5.500 17.500V9z" fill="#8f8f8f" /><path d="M20.500 9v8.500L13 21.500V13.500z" fill="#bdbdbd" /><path d="M5.500 9 13 13.500v8L5.500 17.500z" fill="#6d6d6d" /><path d="M5.500 9 13 5l7.500 4L13 13.500z" fill="#b5b5b5" /><path d="M5.500 9h15L13 21.500v-8z" fill="#fafafa" />
  </svg>
);
const PowerPoint = () => (
  <svg width="30" height="28" viewBox="0 0 30 28">
    <circle cx="16" cy="14" r="13.500" fill="#d35230" /><path d="M16 .5A13.500 13.500 0 0 1 29.500 14H16z" fill="#ff8f6b" /><path d="M16 .5V14H5V6A13.500 13.500 0 0 1 16 .5z" fill="#ed6c47" />
    <rect x="1" y="6" width="15" height="16" rx="1.500" fill="#c43e1c" />
    <text x="8.500" y="18.500" textAnchor="middle" fontFamily="Liberation Sans, sans-serif" fontSize="12.500" fontWeight="700" fill="#fff">P</text>
  </svg>
);
const ChatTile = styled.div`
  width: 30px;
  height: 30px;
  display: flex;
  align-items: center;
  justify-content: center;
  border-radius: 4px;
  background: #fff;
  color: #111;
`;
const Photos = () => (
  <svg width="27" height="27" viewBox="0 0 27 27">
    <defs><linearGradient id="ph" x1="0" y1="0" x2="1" y2=".6"><stop offset="0" stopColor="#1f7fd6" /><stop offset=".6" stopColor="#2d6fc4" /><stop offset="1" stopColor="#8a4fb0" /></linearGradient></defs>
    <rect width="27" height="27" rx="3" fill="url(#ph)" />
    <path d="M0 23 11 11a3 3 0 0 1 4.500 0L27 23v1a3 3 0 0 1-3 3H3a3 3 0 0 1-3-3z" fill="#35c3f6" /><path d="m7 27 9-8.500c1-1 2.500-1 3.500 0l7 6.500a3 3 0 0 1-2.500 2z" fill="#1478cf" />
    <circle cx="20" cy="5.200" r="2.400" fill="#fff" />
  </svg>
);
const ChevronUp = () => (
  <svg width="15" height="9" viewBox="0 0 15 9"><path d="m1.200 7.800 6.300-6.300 6.300 6.300" {...line} strokeWidth="1.800" /></svg>
);
const Wifi = () => (
  <svg width="20" height="16" viewBox="0 0 20 16" {...line} strokeWidth="1.500">
    <path d="M1 6.200a12.700 12.700 0 0 1 18 0M3.800 9a8.700 8.700 0 0 1 12.400 0M6.600 11.600a4.900 4.900 0 0 1 6.800 0" /><circle cx="10" cy="13.800" r="1.500" fill="#fff" stroke="none" />
  </svg>
);
const Volume = () => (
  <svg width="20" height="16" viewBox="0 0 20 16" {...line} strokeWidth="1.300">
    <path d="M1 5.500h2.800L8 1.700v12.600l-4.200-3.800H1zM10.800 5.500a3.500 3.500 0 0 1 0 5M13.200 3.300a6.600 6.600 0 0 1 0 9.400" /><path d="M15.800 1.200a9.700 9.700 0 0 1 0 13.600" stroke="#666" />
  </svg>
);
const Battery = () => (
  <svg width="21" height="17" viewBox="0 0 21 17">
    <path d="M7.500 3.800H15a3 3 0 0 1 3 3v5.400a3 3 0 0 1-3 3H4.300a3 3 0 0 1-3-3V10" {...line} strokeWidth="1.300" />
    <path d="M8 6h6.500a1.400 1.400 0 0 1 1.400 1.400v4.200a1.400 1.400 0 0 1-1.400 1.400h-9A1.400 1.400 0 0 1 4 11.600V10.500z" fill="#fff" /><path d="M19 7.500c1.500 0 1.500 4 0 4z" fill="#fff" stroke="#fff" /><path d="M3.800 0 0 6.500h2.300L1.300 11 6 4.800H3.500L5.500 0z" fill="#fff" />
  </svg>
);

/* ---------- data ---------- */
const tabs = [
  { icon: <BrokenPage />, title: "localhost" },
  { icon: <FastApi />, title: "Job Screening AI - Swagger UI" },
  { icon: <FastApi />, title: "Job Screening AI - ReDoc", w: 298, ls: 0.1 },
  { icon: <Target />, title: "Job Screening AI Dashboard", w: 300, ls: -0.03, active: true },
];
const favorites = [
  { icon: <Gmail />, label: "Gmail", w: 86, ls: -0.2 },
  { icon: <YouTube />, label: "YouTube", w: 107, ls: -0.1 },
  { icon: <Maps />, label: "Maps", w: 83 },
  { icon: <FaGithub size={20} />, label: "Website-Workshop...", w: 192 },
  { icon: <FaGithub size={20} />, label: "Website-Workshop...", w: 193 },
  { icon: <FormsIcon />, label: "Untitled form - Goo...", w: 192 },
  { icon: <PdfIcon />, label: "Complete React JS S...", w: 193 },
  { icon: <Vault />, label: "Vault of Codes", w: 144 },
  { icon: <Globe />, label: "Tutorials List - Javat...", w: 192 },
  { icon: <FaGithub size={20} color="#1b1817" />, label: "GitHub Education", w: 160, ls: -0.08 },
];
const pages = ["Dashboard", "Post Job", "Upload CV", "View Matches", "Schedule Interviews"];
const metrics = [
  ["Active Jobs", "15"],
  ["Total Candidates", "156"],
  ["Pending Matches", "45"],
  ["Scheduled Interviews", "12"],
];
const activity = [
  ["0", "2024-04-06", "New job posted: Senior Python Developer"],
  ["1", "2024-04-06", "5 new candidates matched"],
  ["2", "2024-04-05", "Interview scheduled with John Doe"],
];

export default function App() {
  return (
    <Screen>
      <Global />
      <TabStrip>
        <StripTools>
          <StripTool $w={53}><Avatar /></StripTool>
          <StripTool $w={54}><Workspaces /></StripTool>
          <StripTool $w={30}><TabActions /></StripTool>
        </StripTools>
        {tabs.map((t) => (
          <TabItem key={t.title} $w={t.w} $active={t.active}>
            {t.icon}
            <TabTitle $ls={t.ls}>{t.title}</TabTitle>
            <Close />
          </TabItem>
        ))}
        <NewTab><Plus /></NewTab>
        <WindowButtons>
          <WindowButton><svg width="13" height="2"><path d="M0 1h13" stroke="#fff" strokeWidth="1.300" /></svg></WindowButton>
          <WindowButton><Restore /></WindowButton>
          <WindowButton><Close s={14} w={1.1} /></WindowButton>
        </WindowButtons>
      </TabStrip>
      <AddressRow>
        <NavButton $w={55}><Back /></NavButton>
        <NavButton $w={46}><Reload /></NavButton>
        <AddressBar>
          <Info />
          <Url>localhost<UrlPort>:8501</UrlPort></Url>
          <Star />
        </AddressBar>
        <ToolCell $w={67} $pl={5}><Puzzle /></ToolCell>
        <Rule />
        <ToolCell $w={58}><FavList /></ToolCell>
        <ToolCell $w={52}><Dots /></ToolCell>
        <ToolCell $w={54}><Copilot id="ct" /></ToolCell>
      </AddressRow>
      <FavoritesBar>
        {favorites.map((f, i) => (
          <Favorite key={i} $w={f.w} $ls={f.ls}>{f.icon}<FavoriteName>{f.label}</FavoriteName></Favorite>
        ))}
        <FavoritesEnd>
          <ToolCell $w={53}><ChevronR /></ToolCell>
          <Rule />
          <ToolCell $w={18} />
          <Favorite $ls={-0.22}><Folder /><FavoriteName>Other favorites</FavoriteName></Favorite>
        </FavoritesEnd>
      </FavoritesBar>
      <Page>
        <Sidebar>
          <NavHeading>Navigation</NavHeading>
          <RadioLabel>Go to</RadioLabel>
          {pages.map((p, i) => (
            <RadioRow key={p}><Dot $on={i === 0} /><RadioText>{p}</RadioText></RadioRow>
          ))}
        </Sidebar>
        <Main>
          <Toolbar><DeployLabel>Deploy</DeployLabel><Kebab /></Toolbar>
          <Title>Job Screening AI Dashboard</Title>
          <SectionTitle $mt={41} $size={40.3} $ls={-0.95}>Overview</SectionTitle>
          <Metrics>
            {metrics.map(([label, value]) => (
              <div key={label}>
                <MetricLabel>{label}</MetricLabel>
                <MetricValue>{value}</MetricValue>
              </div>
            ))}
          </Metrics>
          <SectionTitle $mt={27} $size={31.4} $ls={-0.7}>Recent Activity</SectionTitle>
          <Table>
            <thead>
              <tr>
                <Cell as="th" $w="67px" />
                <Cell as="th" $w="279px" $muted>Date</Cell>
                <Cell as="th" $muted>Activity</Cell>
              </tr>
            </thead>
            <tbody>
              {activity.map(([n, date, text]) => (
                <tr key={n}>
                  <Cell $muted>{n}</Cell>
                  <Cell>{date}</Cell>
                  <Cell>{text}</Cell>
                </tr>
              ))}
            </tbody>
          </Table>
        </Main>
        <Decoration />
        <SideLogo><SMark /></SideLogo>
        <ScrollThumb />
        <BrainButton><BrainIcon /></BrainButton>
      </Page>
      <TaskBar>
        <Weather>
          <WeatherIcon />
          <Lines><div>25°C</div><Dim>Mostly cloudy</Dim></Lines>
        </Weather>
        <WinLogo />
        <SearchBox>
          <Magnifier />
          <SearchText>Search</SearchText>
          <Deity />
        </SearchBox>
        <AppSlot><TaskView /></AppSlot>
        <AppSlot><Copilot id="cb" /></AppSlot>
        <AppSlot><Player /></AppSlot>
        <AppSlot $bg="#2b2e2e" $outline><Edge /><Indicator $w={20} $c="#d9b59b" /></AppSlot>
        <AppSlot><Photoshop /></AppSlot>
        <AppSlot><Store /></AppSlot>
        <AppSlot $bg="#83454b"><MyAsus /><Count>1</Count><Indicator $w={8} $c="#ff99a4" /></AppSlot>
        <AppSlot><Explorer /><Indicator $w={8} /></AppSlot>
        <AppSlot><Cursor /><Indicator $w={8} /></AppSlot>
        <AppSlot><PowerPoint /><Indicator $w={8} /></AppSlot>
        <AppSlot><ChatTile><SiOpenai size={23} /></ChatTile><Indicator $w={8} /></AppSlot>
        <AppSlot><Photos /><Indicator $w={8} /></AppSlot>
        <Tray>
          <TrayCell $w={32}><ChevronUp /></TrayCell>
          <TrayCell $w={64}><Lines $align="center" $pb={1}><div>ENG</div><div>US</div></Lines></TrayCell>
          <TrayCell $w={30}><Wifi /></TrayCell>
          <TrayCell $w={30}><Volume /></TrayCell>
          <TrayCell $w={30}><Battery /></TrayCell>
          <TrayCell $w={92} $j="flex-end"><Lines $align="right" $pb={3}><div>22:16</div><div>06-04-2025</div></Lines></TrayCell>
        </Tray>
      </TaskBar>
    </Screen>
  );
}
